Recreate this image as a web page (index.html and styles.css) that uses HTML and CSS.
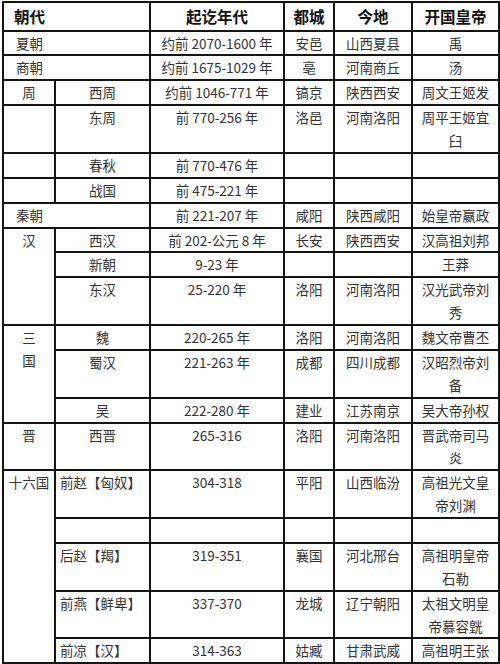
FILE: index.html
```html
<!DOCTYPE html>
<html lang="zh-CN">
<head>
<meta charset="utf-8">
<title>中国朝代表</title>
<link rel="stylesheet" href="styles.css">
</head>
<body>
<table class="dyn">
  <colgroup>
    <col class="c1"><col class="c2"><col class="c3"><col class="c4"><col class="c5"><col class="c6">
  </colgroup>
  <thead>
    <tr>
      <th colspan="2" class="left">朝代</th>
      <th>起讫年代</th>
      <th>都城</th>
      <th>今地</th>
      <th>开国皇帝</th>
    </tr>
  </thead>
  <tbody>
    <tr><td colspan="2" class="left">夏朝</td><td>约前 2070-1600 年</td><td>安邑</td><td>山西夏县</td><td>禹</td></tr>
    <tr><td colspan="2" class="left">商朝</td><td>约前 1675-1029 年</td><td>亳</td><td>河南商丘</td><td>汤</td></tr>
    <tr><td>周</td><td>西周</td><td>约前 1046-771 年</td><td>镐京</td><td>陕西西安</td><td>周文王姬发</td></tr>
    <tr><td></td><td>东周</td><td>前 770-256 年</td><td>洛邑</td><td>河南洛阳</td><td>周平王姬宜臼</td></tr>
    <tr><td></td><td>春秋</td><td>前 770-476 年</td><td></td><td></td><td></td></tr>
    <tr><td></td><td>战国</td><td>前 475-221 年</td><td></td><td></td><td></td></tr>
    <tr><td colspan="2" class="left">秦朝</td><td>前 221-207 年</td><td>咸阳</td><td>陕西咸阳</td><td>始皇帝嬴政</td></tr>
    <tr><td rowspan="3">汉</td><td>西汉</td><td>前 202-公元 8 年</td><td>长安</td><td>陕西西安</td><td>汉高祖刘邦</td></tr>
    <tr><td>新朝</td><td>9-23 年</td><td></td><td></td><td>王莽</td></tr>
    <tr><td>东汉</td><td>25-220 年</td><td>洛阳</td><td>河南洛阳</td><td>汉光武帝刘秀</td></tr>
    <tr><td rowspan="3">三<br>国</td><td>魏</td><td>220-265 年</td><td>洛阳</td><td>河南洛阳</td><td>魏文帝曹丕</td></tr>
    <tr><td>蜀汉</td><td>221-263 年</td><td>成都</td><td>四川成都</td><td>汉昭烈帝刘备</td></tr>
    <tr><td>吴</td><td>222-280 年</td><td>建业</td><td>江苏南京</td><td>吴大帝孙权</td></tr>
    <tr><td>晋</td><td>西晋</td><td>265-316</td><td>洛阳</td><td>河南洛阳</td><td>晋武帝司马炎</td></tr>
    <tr><td rowspan="5">十六国</td><td class="left">前赵【匈奴】</td><td>304-318</td><td>平阳</td><td>山西临汾</td><td>高祖光文皇帝刘渊</td></tr>
    <tr class="blank"><td>&nbsp;</td><td>&nbsp;</td><td>&nbsp;</td><td>&nbsp;</td><td>&nbsp;</td></tr>
    <tr><td class="left">后赵【羯】</td><td>319-351</td><td>襄国</td><td>河北邢台</td><td>高祖明皇帝石勒</td></tr>
    <tr><td class="left">前燕【鲜卑】</td><td>337-370</td><td>龙城</td><td>辽宁朝阳</td><td>太祖文明皇帝慕容皝</td></tr>
    <tr><td class="left">前凉【汉】</td><td>314-363</td><td>姑臧</td><td>甘肃武威</td><td>高祖明王张</td></tr>
  </tbody>
</table>
</body>
</html>
```

FILE: styles.css
```css
html, body {
  margin: 0;
  padding: 0;
  background: #ffffff;
}

body {
  font-family: "Noto Sans CJK SC", "Noto Sans", sans-serif;
  color: #333333;
}

.dyn {
  border-collapse: collapse;
  table-layout: fixed;
  width: 496px;
  margin: 1px 0 0 2px;
}

.c1 { width: 52px; }
.c2 { width: 95px; }
.c3 { width: 134px; }
.c4 { width: 50px; }
.c5 { width: 78px; }
.c6 { width: 87px; }

.dyn th,
.dyn td {
  border: 2px solid #151515;
  text-align: center;
  vertical-align: top;
  padding: 0 4px;
  word-break: break-all;
}

.dyn th {
  font-size: 15.5px;
  font-weight: 700;
  color: #111111;
  line-height: 26.5px;
}

.dyn td {
  font-size: 13.5px;
  line-height: 22.87px;
  font-weight: 400;
}

.dyn th.left,
.dyn td.left {
  text-align: left;
}

.dyn th.left {
  padding-left: 10px;
}

.dyn td[colspan].left {
  padding-left: 12px;
}

.dyn td.left {
  padding-left: 4px;
}
```
